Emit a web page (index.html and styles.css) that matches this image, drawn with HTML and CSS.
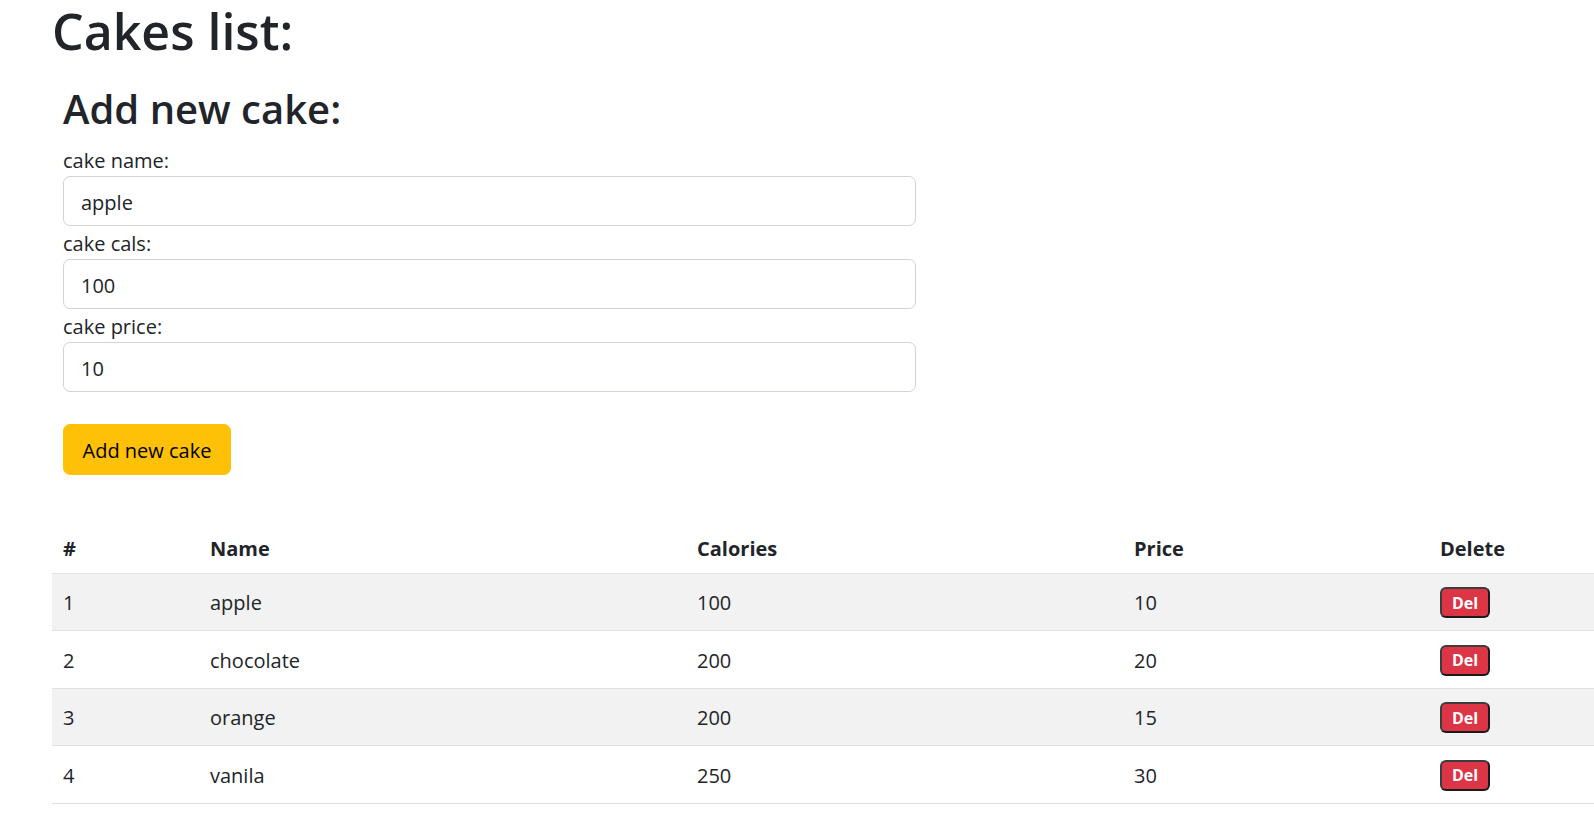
FILE: index.html
```html
<!DOCTYPE html>
<html lang="en">
<head>
<meta charset="utf-8">
<title>Cakes list</title>
<link rel="stylesheet" href="styles.css">
</head>
<body>
<div class="page">
  <h1 class="title">Cakes list:</h1>
  <form class="add-form">
    <h2 class="subtitle">Add new cake:</h2>
    <label class="field-label" for="name">cake name:</label>
    <input class="field-input" id="name" type="text" value="apple">
    <label class="field-label" for="cals">cake cals:</label>
    <input class="field-input" id="cals" type="text" value="100">
    <label class="field-label" for="price">cake price:</label>
    <input class="field-input" id="price" type="text" value="10">
    <button class="add-btn" type="button">Add new cake</button>
  </form>
  <table class="cakes">
    <colgroup>
      <col class="c-num"><col class="c-name"><col class="c-cal"><col class="c-price"><col class="c-del">
    </colgroup>
    <thead>
      <tr><th>#</th><th>Name</th><th>Calories</th><th>Price</th><th>Delete</th></tr>
    </thead>
    <tbody>
      <tr class="odd"><td>1</td><td>apple</td><td>100</td><td>10</td><td><button class="del-btn" type="button">Del</button></td></tr>
      <tr><td>2</td><td>chocolate</td><td>200</td><td>20</td><td><button class="del-btn" type="button">Del</button></td></tr>
      <tr class="odd"><td>3</td><td>orange</td><td>200</td><td>15</td><td><button class="del-btn" type="button">Del</button></td></tr>
      <tr><td>4</td><td>vanila</td><td>250</td><td>30</td><td><button class="del-btn" type="button">Del</button></td></tr>
    </tbody>
  </table>
</div>
</body>
</html>
```

FILE: styles.css
```css
* { box-sizing: border-box; }
html, body { margin: 0; padding: 0; background: #fff; }
body {
  font-family: "Open Sans", "Noto Sans", sans-serif;
  font-size: 20px;
  color: #212529;
  overflow: hidden;
}
.page {
  padding-left: 52px;
}
.title {
  margin: 0;
  font-size: 50px;
  font-weight: 600;
  line-height: 62px;
}
.add-form {
  margin: 23px 0 0 11px;
  width: 853px;
  display: flex;
  flex-direction: column;
}
.subtitle {
  margin: 0 0 10px;
  font-size: 40px;
  font-weight: 600;
  line-height: 48px;
}
.field-label {
  display: block;
  line-height: 35px;
  height: 33px;
}
.field-input {
  display: block;
  width: 100%;
  height: 50px;
  padding: 2px 17px 0;
  font: inherit;
  color: #212529;
  border: 1px solid #ced4da;
  border-radius: 7px;
  background: #fff;
}
.add-btn {
  align-self: flex-start;
  margin-top: 32px;
  height: 51px;
  width: 168px;
  padding: 2px 0 0;
  font: inherit;
  color: #000;
  background: #ffc107;
  border: 1px solid #ffc107;
  border-radius: 7px;
}
.cakes {
  margin-top: 47px;
  width: 1542px;
  border-collapse: collapse;
  table-layout: fixed;
}
.c-num { width: 147px; }
.c-name { width: 487px; }
.c-cal { width: 437px; }
.c-price { width: 306px; }
.c-del { width: 165px; }
.cakes th, .cakes td {
  text-align: left;
  padding: 2px 11px 0;
  vertical-align: middle;
  border-bottom: 1px solid #dee2e6;
}
.cakes th {
  height: 51px;
  font-weight: 700;
}
.cakes td {
  height: 57.5px;
}
.cakes tr.odd td {
  background: #f2f2f2;
}
.del-btn {
  display: block;
  width: 50px;
  height: 31px;
  padding: 0;
  font-family: "Open Sans", sans-serif;
  font-size: 16px;
  font-weight: 700;
  color: #fff;
  background: #dc3545;
  border: 2px solid #3c3c3c;
  border-right-color: #1a1a1a;
  border-bottom-color: #1a1a1a;
  border-radius: 6px;
}
```
